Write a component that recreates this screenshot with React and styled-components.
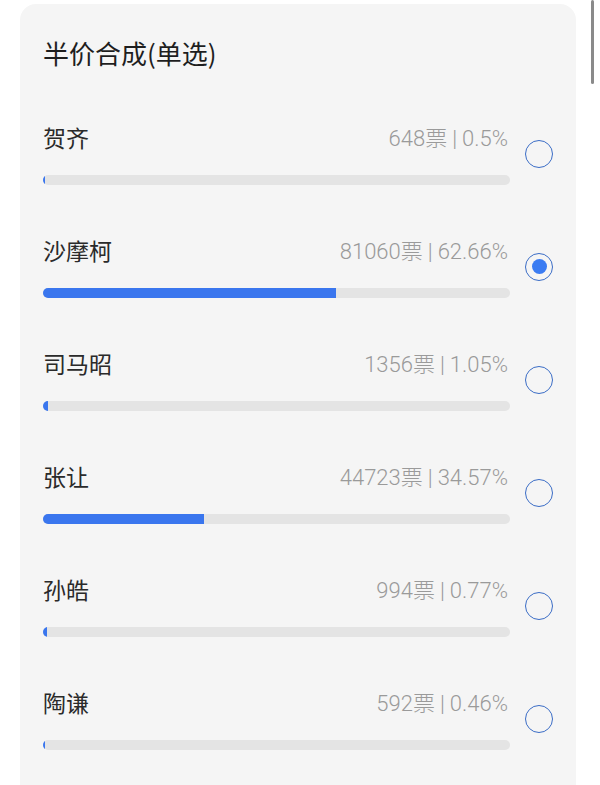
import React from "react";
import styled, { createGlobalStyle } from "styled-components";

const Global = createGlobalStyle`
  html, body { margin: 0; padding: 0; background: #ffffff; }
  body { font-family: "Noto Sans CJK SC", "Noto Sans", sans-serif; overflow: hidden; }
`;

const Page = styled.div`
  width: 600px;
  height: 785px;
  position: relative;
  overflow: hidden;
`;

const ScrollThumb = styled.div`
  position: absolute;
  top: 0;
  left: 591px;
  width: 3px;
  height: 84px;
  border-radius: 2px;
  background: #8a8a8a;
`;

const Card = styled.section`
  margin: 4px 0 0 20px;
  width: 556px;
  min-height: 900px;
  box-sizing: border-box;
  background: #f5f5f5;
  border-radius: 16px;
  padding: 31px 23px 0 23px;
`;

const Title = styled.h2`
  margin: 0;
  font-size: 26px;
  font-weight: 400;
  line-height: 36px;
  color: #1e1e1e;
`;

const List = styled.div`
  display: flex;
  flex-direction: column;
  gap: 50px;
  margin-top: 51px;
`;

const Row = styled.div`
  display: flex;
  align-items: center;
  gap: 15px;
`;

const Content = styled.div`
  flex: 0 0 467px;
  display: flex;
  flex-direction: column;
  gap: 23px;
`;

const Head = styled.div`
  display: flex;
  justify-content: space-between;
  align-items: center;
  height: 30px;
`;

const Name = styled.span`
  font-size: 23px;
  line-height: 30px;
  color: #2a2a2a;
`;

const Stats = styled.span`
  font-family: "Roboto", "Noto Sans CJK SC", sans-serif;
  font-size: 22px;
  line-height: 30px;
  color: #9a9a9a;
  font-weight: 300;
  margin-right: 2px;
  margin-top: 4px;
`;

const Sep = styled.span`
  margin: 0 5px;
`;

const Track = styled.div`
  height: 10px;
  border-radius: 5px;
  background: #e4e4e4;
  overflow: hidden;
`;

const Fill = styled.div`
  height: 100%;
  background: #3a76ee;
  min-width: 2px;
`;

const Radio = styled.div`
  flex: 0 0 auto;
  width: 28px;
  height: 28px;
  box-sizing: border-box;
  border-radius: 50%;
  border: 1.8px solid #3b6dc6;
  display: flex;
  align-items: center;
  justify-content: center;
`;

const Dot = styled.div`
  width: 15px;
  height: 15px;
  border-radius: 50%;
  background: #3b7cf2;
`;

const options = [
  { name: "贺齐", votes: 648, pct: "0.5" },
  { name: "沙摩柯", votes: 81060, pct: "62.66", selected: true },
  { name: "司马昭", votes: 1356, pct: "1.05" },
  { name: "张让", votes: 44723, pct: "34.57" },
  { name: "孙皓", votes: 994, pct: "0.77" },
  { name: "陶谦", votes: 592, pct: "0.46" },
];

export default function App() {
  return (
    <Page>
      <Global />
      <Card>
        <Title>半价合成(单选)</Title>
        <List>
          {options.map((o) => (
            <Row key={o.name}>
              <Content>
                <Head>
                  <Name>{o.name}</Name>
                  <Stats>
                    {o.votes}票<Sep>|</Sep>{o.pct}%
                  </Stats>
                </Head>
                <Track>
                  <Fill style={{ width: `${o.pct}%` }} />
                </Track>
              </Content>
              <Radio>{o.selected && <Dot />}</Radio>
            </Row>
          ))}
        </List>
      </Card>
      <ScrollThumb />
    </Page>
  );
}
